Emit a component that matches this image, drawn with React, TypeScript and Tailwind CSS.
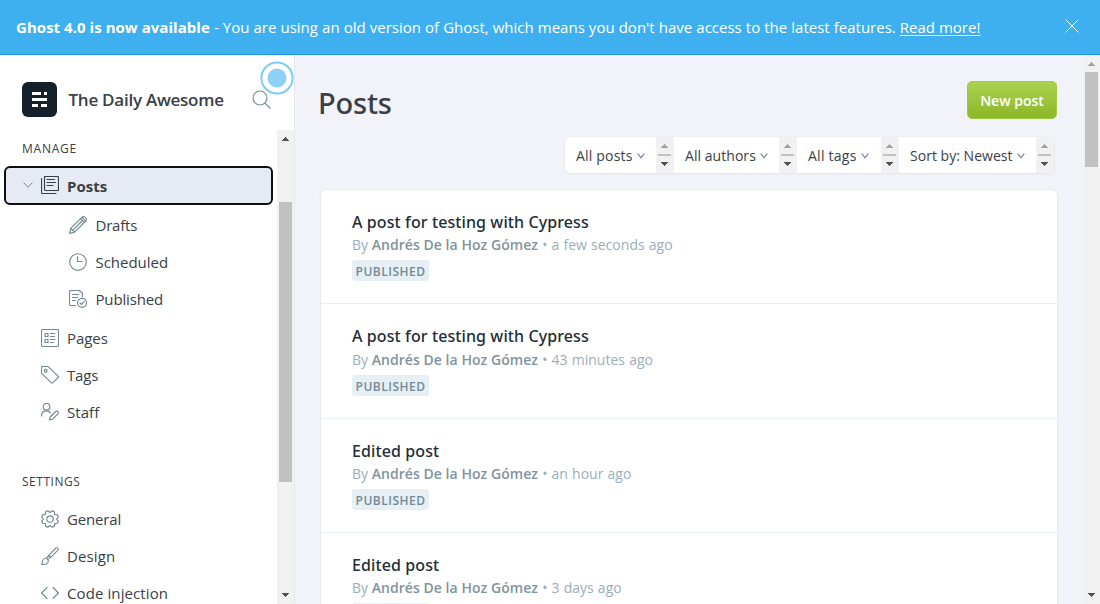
import type { ReactNode } from "react";

function Icon({ children, className = "" }: { children: ReactNode; className?: string }) {
  return (
    <svg
      viewBox="0 0 18 18"
      fill="none"
      stroke="currentColor"
      strokeWidth="1.15"
      strokeLinecap="round"
      strokeLinejoin="round"
      className={`h-[18px] w-[18px] shrink-0 ${className || "mb-px text-[#738a94]"}`}
    >
      {children}
    </svg>
  );
}

const icons = {
  posts: (
    <Icon className="mb-px text-[#394047]">
      <path d="M3.500.500h13a1 1 0 0 1 1 1v13h-13a1 1 0 0 1-1-1zM.5 2.500v14a1 1 0 0 0 1 1h13.500" />
      <path d="M6 3.500h7.500M6 6.500h8.500M6 9.500h6" />
    </Icon>
  ),
  drafts: (
    <Icon>
      <path d="M.6 17.400l1.200-5L13 1.200a2 2 0 0 1 2.900 0l.9.900a2 2 0 0 1 0 2.900L5.600 16.200zM1.800 12.400l3.800 3.800M11.600 2.600l3.800 3.800M12.900 1.300l3.800 3.800M3.700 14.300l9.800-9.800" />
    </Icon>
  ),
  scheduled: (
    <Icon>
      <circle cx="9" cy="9" r="8.300" />
      <path d="M8.500 3.500v5h4.500" />
    </Icon>
  ),
  published: (
    <Icon>
      <path d="M6.500 15.500h-5a1 1 0 0 1-1-1v-13a1 1 0 0 1 1-1h9l3 3v3M3.500 4.500h6M3.500 7.500h5M3.500 10.500h3" />
      <circle cx="13" cy="12.800" r="4.500" />
      <path d="M11 13l1.500 1.500 2.600-3.200" />
    </Icon>
  ),
  pages: (
    <Icon>
      <rect x=".5" y=".5" width="17" height="17" rx="1" />
      <path d="M4 4.500h3v3H4zM4 10.500h3v3H4zM9.500 4.500h4.500M9.500 7.500h4M9.500 10.500h4.500M9.500 13.500h3" />
    </Icon>
  ),
  tags: (
    <Icon>
      <path d="M.5 1.500a1 1 0 0 1 1-1h5.200a1 1 0 0 1 .7.300l9.800 9.500a.8.800 0 0 1 0 1.100l-5.600 5.500a.8.800 0 0 1-1.100 0L.8 7.700a1 1 0 0 1-.3-.7z" />
      <circle cx="4.700" cy="4.700" r="1.400" />
    </Icon>
  ),
  staff: (
    <Icon>
      <circle cx="5.500" cy="3.800" r="3.300" />
      <path d="M.5 13c0-3 2-5.200 5-5.200 1.700 0 3 .7 4 2M8.500 17l.6-3 5.600-5.500a1.400 1.400 0 0 1 2 0l.3.300a1.400 1.400 0 0 1 0 2L11.500 16.300z" />
    </Icon>
  ),
  general: (
    <Icon>
      <circle cx="9" cy="9" r="3.200" />
      <path d="M6.800.700 9 2.500 11.200.700 13.300 1.600 13.600 4.400 16.400 4.700 17.300 6.800 15.500 9 17.300 11.200 16.400 13.300 13.600 13.600 13.300 16.400 11.200 17.300 9 15.500 6.800 17.300 4.700 16.400 4.400 13.600 1.600 13.300.700 11.200 2.500 9 .7 6.800 1.600 4.700 4.400 4.400 4.700 1.600z" />
    </Icon>
  ),
  design: (
    <Icon>
      <path d="M.6 17.400c1.400-1 .3-3.400 1.500-4.900 1.200-1.600 3.300-1.600 4.400-.4 1.200 1.200 1 3-.2 4.100-1.300 1.200-3.600 1.500-5.700 1.200zM5.500 11.400l2.200-3L15 1a1.500 1.500 0 0 1 2 2.100L9.700 10.400l-3.100 2.200M7.700 8.400l2 2" />
    </Icon>
  ),
  code: (
    <Icon>
      <path d="M6 3.500L.6 9 6 14.500M12 3.500L17.400 9 12 14.500" />
    </Icon>
  ),
};

function NavItem({ icon, label, className }: { icon: ReactNode; label: string; className: string }) {
  return (
    <a className={`flex h-[37px] items-center ${className}`}>
      {icon}
      <span className="ml-[8.5px] whitespace-nowrap">{label}</span>
    </a>
  );
}

function Arrow({ down = false, className }: { down?: boolean; className: string }) {
  return (
    <svg viewBox="0 0 8 4" className={`h-1 w-2 ${className}`} fill="currentColor" shapeRendering="crispEdges">
      <path d={down ? "M0 0h8L4 4z" : "M0 4h8L4 0z"} />
    </svg>
  );
}

function Filter({ label, width, text }: { label: string; width: string; text: string }) {
  return (
    <div className={`flex shrink-0 ${width}`}>
      <div className="flex flex-1 items-center pl-[11px]">
        <span className={`whitespace-nowrap ${text}`}>{label}</span>
        <svg viewBox="0 0 8 6" className="ml-1 mt-0.5 h-1.5 w-2 text-[#7c8b9a]" fill="none" stroke="currentColor" strokeWidth="1.2">
          <path d="M.7.700L4 4.700 7.300.7" />
        </svg>
      </div>
      <div className="flex w-[18px] flex-col items-center bg-[#f1f1f1] pt-[7px] pr-0.5">
        <Arrow className="text-[#a3a3a3]" />
        <div className="mt-[6px] ml-px h-[2px] w-[13px] bg-[#c1c1c1]" />
        <Arrow down className="mt-[6px] text-[#505050]" />
      </div>
    </div>
  );
}

const posts = [
  { title: "A post for testing with Cypress", time: "a few seconds ago", height: "h-[114px]", gap: "" },
  { title: "A post for testing with Cypress", time: "43 minutes ago", height: "h-[115px]", gap: "mt-px" },
  { title: "Edited post", time: "an hour ago", height: "h-[114px]", gap: "" },
  { title: "Edited post", time: "3 days ago", height: "h-[114px]", gap: "" },
];

export default function App() {
  return (
    <div className="flex h-[604px] w-[1100px] flex-col overflow-hidden bg-white font-['Open_Sans','Noto_Sans',sans-serif] text-[#394047]">
      <header className="flex h-[55px] shrink-0 items-center border-b border-[#1a9ae6] bg-[#3eb0ef] pl-4 text-[15px] text-white">
        <p className="flex-1 whitespace-nowrap">
          <b className="tracking-[0.04px]">Ghost 4.0 is now available</b>
          <span className="[word-spacing:0.18px]"> - You are using an old version of Ghost, which means you don't have access to the latest features. </span>
          <a className="underline underline-offset-2">Read more!</a>
        </p>
        <svg viewBox="0 0 14 14" className="mr-[21px] mb-0.5 h-3.5 w-3.5" fill="none" stroke="currentColor">
          <path d="M.6.600l12.800 12.800M13.400.600L.6 13.400" />
        </svg>
      </header>

      <div className="flex min-h-0 flex-1">
        <aside className="flex w-[295px] shrink-0 flex-col border-r border-[#e5e9f0]">
          <div className="relative flex h-[75px] shrink-0 items-center pt-[14px] pl-[22px]">
            <svg viewBox="0 0 35 35" className="h-[35px] w-[35px]">
              <rect width="35" height="35" rx="6" fill="#15212a" />
              <path fill="#fff" d="M10 10h9v3h-9zM22 10h3v3h-3zM10 16h15v3H10zM10 22h6v3h-6zM19 22h6v3h-6z" />
            </svg>
            <span className="ml-[11.5px] pt-px text-[17px] font-semibold tracking-[-0.25px] whitespace-nowrap">The Daily Awesome</span>
            <svg viewBox="0 0 19 19" className="absolute top-[35px] left-[252px] h-[19px] w-[19px] text-[#738a94]" fill="none" stroke="currentColor" strokeWidth="1.100">
              <circle cx="8" cy="8" r="7" />
              <path d="M13 13l5.500 5.500" />
            </svg>
            <svg viewBox="0 0 34 34" className="absolute top-[6px] left-[260px] h-[34px] w-[34px]" fill="none">
              <circle cx="17" cy="17" r="15.600" stroke="#7cccf5" strokeWidth="2" fill="#fff" fillOpacity=".75" />
              <circle cx="17" cy="17" r="9.500" fill="#8fd0f7" />
            </svg>
          </div>

          <div className="flex min-h-0 flex-1">
            <nav className="min-w-0 flex-1 overflow-hidden text-[15px]">
              <h2 className="mt-[10px] ml-[22px] h-[18px] text-[12px] leading-[18px] tracking-[0.75px]">MANAGE</h2>
              <a className="mt-[8px] ml-1 flex h-[39px] w-[269px] items-center rounded-md border-2 border-[#0d1013] bg-[#e6eaf2] pl-[17px] font-bold">
                <svg viewBox="0 0 10 6" className="mr-2 mb-px h-1.5 w-2.5 text-[#7c8b9a]" fill="none" stroke="currentColor">
                  <path d="M.5.500L5 5.200 9.500.500" />
                </svg>
                {icons.posts}
                <span className="ml-2 pt-px">Posts</span>
              </a>
              <NavItem icon={icons.drafts} label="Drafts" className="mt-[2px] pl-[69px] tracking-[-0.2px]" />
              <NavItem icon={icons.scheduled} label="Scheduled" className="pl-[69px] tracking-[-0.03px]" />
              <NavItem icon={icons.published} label="Published" className="pl-[69px] tracking-[-0.15px]" />
              <NavItem icon={icons.pages} label="Pages" className="mt-[2px] pl-[40.5px] tracking-[-0.05px]" />
              <NavItem icon={icons.tags} label="Tags" className="pl-[40.5px] tracking-[-0.15px]" />
              <NavItem icon={icons.staff} label="Staff" className="pl-[40.5px] tracking-[0.05px]" />
              <h2 className="mt-[42px] ml-[22px] h-[18px] text-[12px] leading-[18px] tracking-[0.52px]">SETTINGS</h2>
              <NavItem icon={icons.general} label="General" className="mt-[10px] pl-[40.5px] tracking-[-0.15px]" />
              <NavItem icon={icons.design} label="Design" className="pl-[40.5px] tracking-[0.1px]" />
              <NavItem icon={icons.code} label="Code injection" className="pl-[40.5px] tracking-[0.1px]" />
            </nav>
            <div className="flex w-[17px] shrink-0 flex-col items-center bg-[#f1f1f1] pr-px">
              <Arrow className="mt-[7px] text-[#505050]" />
              <div className="mt-[61px] ml-px h-[280px] w-[13px] bg-[#c1c1c1]" />
              <Arrow down className="mt-auto mb-[7px] text-[#505050]" />
            </div>
          </div>
        </aside>

        <main className="min-w-0 flex-1 bg-[#f2f3f8] pr-[26px] pl-[23px]">
          <div className="mt-[26px] flex h-[38px] items-center justify-between">
            <h1 className="pt-[5px] font-['Noto_Sans'] text-[29px] font-medium tracking-[-0.2px]">Posts</h1>
            <button className="h-[38px] w-[90px] rounded-[5px] border border-[#9fcb3d] bg-linear-to-b from-[#abd34e] to-[#8cb726] text-[14px] font-semibold text-white">
              New post
            </button>
          </div>
          <div className="mt-[18px] mr-[3px] ml-auto flex h-9 w-[489px] overflow-hidden rounded-[5px] bg-white text-[14px] shadow-[0_0_1px_rgba(0,0,0,.15),0_1px_3px_rgba(0,0,0,.05)]">
            <Filter label="All posts" width="w-[109px]" text="tracking-[0.2px]" />
            <Filter label="All authors" width="w-[123px]" text="tracking-[0.05px]" />
            <Filter label="All tags" width="w-[102px]" text="tracking-[0.25px]" />
            <Filter label="Sort by: Newest" width="w-[155px]" text="tracking-[0.03px]" />
          </div>
          <div className="mt-[17px] ml-[3px] w-[736px] rounded-t-[5px] bg-white shadow-[0_0_1px_rgba(0,0,0,.2),0_1px_4px_rgba(0,0,0,.05)]">
            {posts.map((p, i) => (
              <article key={i} className={`border-b border-[#e5eff5] pt-5 pl-[31px] ${p.height}`}>
                <h3 className="h-6 font-['Noto_Sans'] text-[16px] leading-6 font-medium tracking-[0.1px] text-[#222d35]">{p.title}</h3>
                <p className={`h-[22px] text-[14px] leading-[22px] whitespace-nowrap text-[#9baeb9] ${p.gap}`}>
                  By <b className="font-semibold tracking-[0.05px] text-[#7f939e]">Andrés De la Hoz Gómez</b>
                  <span className="tracking-[0.03px] [word-spacing:0.400px]"> • {p.time}</span>
                </p>
                <span className="mt-1 flex h-[21px] w-[77px] items-center rounded-[3px] bg-[#e5eff5] pt-0.5 pl-[3.5px] text-[12px] font-semibold tracking-[0.5px] text-[#738a94]">
                  PUBLISHED
                </span>
              </article>
            ))}
          </div>
        </main>

        <div className="flex w-[17px] shrink-0 flex-col items-center bg-[#f1f1f1] pr-px">
          <Arrow className="mt-[7px] text-[#a3a3a3]" />
          <div className="mt-[6px] ml-px h-[95px] w-[13px] bg-[#c1c1c1]" />
          <Arrow down className="mt-auto mb-[7px] text-[#505050]" />
        </div>
      </div>
    </div>
  );
}
